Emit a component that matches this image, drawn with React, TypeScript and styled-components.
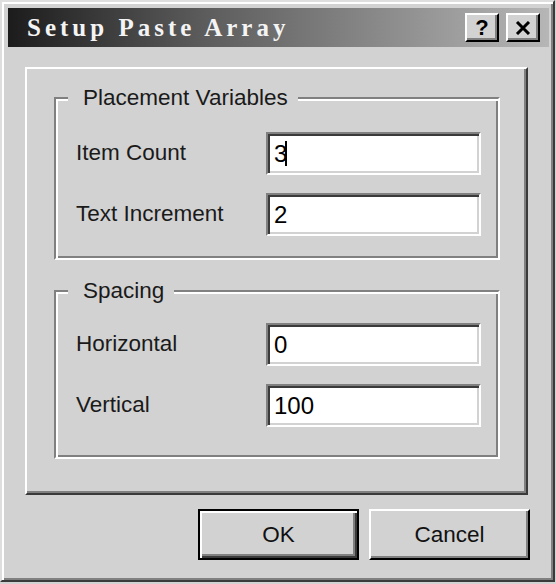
import React from 'react'
import styled, { createGlobalStyle } from 'styled-components'

const GlobalStyle = createGlobalStyle`
  html, body {
    margin: 0;
    padding: 0;
    background: #d2d2d2;
  }
  body {
    font-family: "Liberation Sans", Arial, sans-serif;
  }
`

const WindowStyled = styled.div`
  box-sizing: border-box;
  width: 555px;
  height: 582px;
  display: flex;
  flex-direction: column;
  padding: 6px 4px 6px 6px;
  background: #d2d2d2;
  border: 2px solid;
  border-color: #dedede #3a3a3a #3a3a3a #dedede;
  box-shadow: inset 2px 2px #fff, inset -2px -2px #808080;
`
const TitleBar = styled.div`
  display: flex;
  align-items: center;
  height: 39px;
  padding: 0 9px 0 19px;
  background: linear-gradient(90deg, #1c1c1c 0%, #5a5a5a 35%, #b6b6b6 100%);
`
const Title = styled.div`
  flex: 1;
  color: #f4f4f4;
  font-family: "Liberation Serif", "Times New Roman", serif;
  font-weight: bold;
  font-size: 25px;
  letter-spacing: 4px;
`
const TitleButton = styled.div`
  box-sizing: border-box;
  display: flex;
  align-items: center;
  justify-content: center;
  width: 34px;
  height: 29px;
  margin-left: 7px;
  background: #d2d2d2;
  border: 2px solid;
  border-color: #fff #000 #000 #fff;
  box-shadow: inset -2px -2px #808080;
  font-weight: bold;
  font-size: 22px;
  color: #000;
`
const Panel = styled.div`
  margin: 20px 21px 0 17px;
  padding: 28px 26px 34px 27px;
  border: 2px solid;
  border-color: #fff #3a3a3a #3a3a3a #fff;
  box-shadow: inset -2px -2px #808080;
`
const GroupBox = styled.div<{ $top: number; $bottom: number; $gap: number }>`
  position: relative;
  margin-top: ${(p) => p.$gap}px;
  padding: ${(p) => p.$top}px 17px ${(p) => p.$bottom}px 20px;
  border: 2px solid;
  border-color: #808080 #fff #fff #808080;
  box-shadow: inset 2px 2px #fff, inset -2px -2px #808080;
  display: grid;
  grid-template-columns: 190px 215px;
  grid-auto-rows: 43px;
  row-gap: 18px;
  align-items: center;
`
const Legend = styled.span`
  position: absolute;
  top: -14px;
  left: 12px;
  height: 26px;
  line-height: 26px;
  padding: 0 10px 0 15px;
  background: #d2d2d2;
  font-size: 22.5px;
  color: #1a1a1a;
`
const Label = styled.div`
  font-size: 22.5px;
  color: #1a1a1a;
  margin-top: -1px;
`
const Field = styled.div`
  box-sizing: border-box;
  display: flex;
  align-items: center;
  height: 43px;
  padding-left: 6px;
  background: #fff;
  border: 2px solid;
  border-color: #808080 #fff #fff #808080;
  box-shadow: inset 2px 2px #3a3a3a, inset -2px -2px #d2d2d2;
  font-size: 24px;
  color: #000;
`
const Caret = styled.span`
  display: inline-block;
  width: 2px;
  height: 25px;
  margin-left: -2px;
  background: #000;
`
const ButtonRow = styled.div`
  display: flex;
  justify-content: flex-end;
  gap: 10px;
  margin-top: 14px;
  padding-right: 19px;
`
const Button = styled.div<{ $default?: boolean }>`
  box-sizing: border-box;
  display: flex;
  align-items: center;
  justify-content: center;
  width: 161px;
  height: 51px;
  border: 2px solid;
  border-color: ${(p) => (p.$default ? '#000' : '#fff #000 #000 #fff')};
  box-shadow: ${(p) =>
    p.$default
      ? 'inset 2px 2px #fff, inset -2px -2px #3a3a3a, inset -4px -4px #808080'
      : 'inset -2px -2px #808080'};
  font-size: 22.5px;
  color: #111;
`

type FieldRow = { label: string; value: string; caret?: boolean }

const placement: FieldRow[] = [
  { label: 'Item Count', value: '3', caret: true },
  { label: 'Text Increment', value: '2' }
]
const spacing: FieldRow[] = [
  { label: 'Horizontal', value: '0' },
  { label: 'Vertical', value: '100' }
]

const Rows = ({ rows }: { rows: FieldRow[] }) => (
  <>
    {rows.map((row) => (
      <React.Fragment key={row.label}>
        <Label>{row.label}</Label>
        <Field>
          {row.value}
          {row.caret && <Caret />}
        </Field>
      </React.Fragment>
    ))}
  </>
)

const App: React.FC = () => {
  return (
    <>
      <GlobalStyle />
      <WindowStyled>
        <TitleBar>
          <Title>Setup Paste Array</Title>
          <TitleButton>?</TitleButton>
          <TitleButton>
            <svg width="16" height="14" viewBox="0 0 16 14">
              <path d="M2 1 L14 13 M14 1 L2 13" stroke="#000" strokeWidth="3" />
            </svg>
          </TitleButton>
        </TitleBar>
        <Panel>
          <GroupBox $gap={0} $top={33} $bottom={22}>
            <Legend>Placement Variables</Legend>
            <Rows rows={placement} />
          </GroupBox>
          <GroupBox $gap={30} $top={31} $bottom={30}>
            <Legend>Spacing</Legend>
            <Rows rows={spacing} />
          </GroupBox>
        </Panel>
        <ButtonRow>
          <Button $default>OK</Button>
          <Button>Cancel</Button>
        </ButtonRow>
      </WindowStyled>
    </>
  )
}

export default App
